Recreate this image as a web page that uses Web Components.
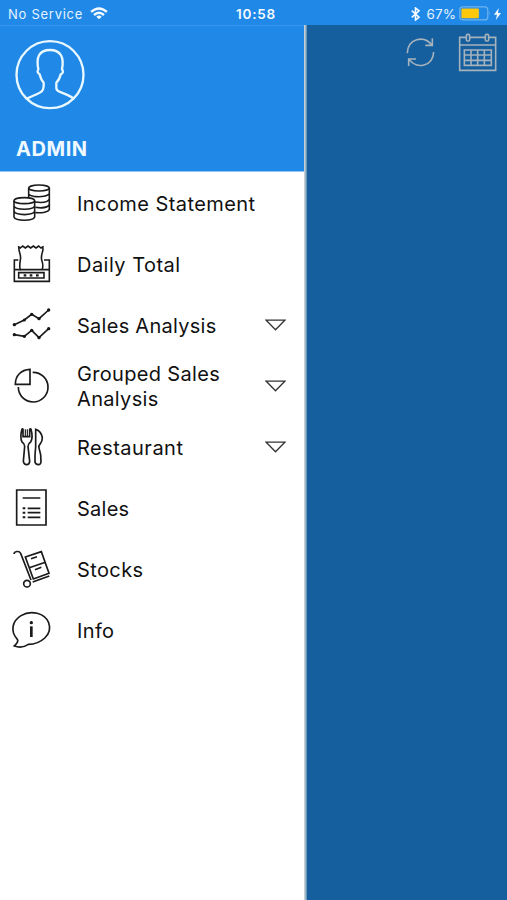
<!DOCTYPE html>
<html lang="en">
<head>
<meta charset="utf-8">
<title>Admin menu</title>
<style>
html,body{margin:0;height:100%}
body{font-family:Inter,"Liberation Sans",sans-serif;overflow:hidden}
</style>
</head>
<body>
<app-shell>
  <status-bar slot="status"></status-bar>
  <side-drawer slot="drawer">
    <user-header slot="header">ADMIN</user-header>
    <menu-row icon="coins" ls=".43">Income Statement</menu-row>
    <menu-row icon="receipt" ls=".48">Daily Total</menu-row>
    <menu-row icon="lines" ls=".27" expandable>Sales Analysis</menu-row>
    <menu-row icon="pie" ls=".33" expandable wrap>Grouped Sales Analysis</menu-row>
    <menu-row icon="cutlery" ls=".48" expandable>Restaurant</menu-row>
    <menu-row icon="list" ls=".25">Sales</menu-row>
    <menu-row icon="trolley" ls=".4">Stocks</menu-row>
    <menu-row icon="info" ls=".35">Info</menu-row>
  </side-drawer>
  <page-tools slot="page"></page-tools>
</app-shell>
<script>
class Base extends HTMLElement {
  connectedCallback() {
    if (this.shadowRoot) return;
    this.attachShadow({mode: 'open'}).innerHTML = this.view();
  }
}

customElements.define('app-shell', class extends Base {
  view() { return `<style>
    :host{display:grid;grid-template:25px 1fr / 307px 1fr;width:100%;height:100vh;background:#155f9f;overflow:hidden}
    slot[name=status]{grid-column:1/3;display:block}
    slot{display:block;min-width:0}
    </style><slot name="status"></slot><slot name="drawer"></slot><slot name="page"></slot>`; }
});

customElements.define('status-bar', class extends Base {
  view() { return `<style>
    :host{display:grid;grid-template-columns:1fr auto 1fr;align-items:center;height:25px;box-sizing:border-box;padding:2px 6px 0 8px;
      background:#2089e8;color:#e4f3ff;font-size:13px;line-height:22px;white-space:nowrap}
    .l,.r{display:flex;align-items:center}
    .r{justify-content:flex-end}
    .c{font-weight:600;font-size:13.5px;letter-spacing:.75px;color:#f4faff;padding-left:3px}
    .s{letter-spacing:.73px}
    svg{display:block}
    .wifi{margin-left:7px}
    .pct{margin:0 3px 0 6px;font-size:13.5px;letter-spacing:.1px}
    .bolt{margin-left:3px}
    </style>
    <div class="l"><span class="s">No Service</span>
      <svg class="wifi" width="18" height="13" viewBox="0 0 18 13" fill="none" stroke="#f4faff" stroke-width="2.400">
        <path d="M1.100 4.900Q9-2 16.900 4.900M4 8Q9 3.600 14 8"/><path d="M9 12.300L6.300 9.700Q9 7.400 11.700 9.700Z" fill="#f4faff" stroke="none"/></svg></div>
    <div class="c">10:58</div>
    <div class="r">
      <svg width="9" height="14" viewBox="0 0 9 14" fill="none" stroke="#f4faff" stroke-width="1.600"><path d="M.8 3.700L8 10.200L4.500 13V1L8 3.800L.8 10.300"/></svg>
      <span class="pct">67%</span>
      <svg width="32" height="15" viewBox="0 0 32 15"><rect x=".8" y=".9" width="28" height="13" rx="3" fill="none" stroke="#6fb3ee" stroke-width="1.200"/><rect x="2.400" y="2.600" width="17.500" height="9.600" rx="1" fill="#fdc70c"/><path d="M30.300 5.200Q32 7.400 30.300 9.600Z" fill="#6fb3ee"/></svg>
      <svg class="bolt" width="7" height="12" viewBox="0 0 7 12"><path d="M4.800 0L0 6.700H3L1.800 12L7 4.900H3.900Z" fill="#f4faff"/></svg>
    </div>`; }
});

customElements.define('side-drawer', class extends Base {
  view() { return `<style>
    :host{display:flex;flex-direction:column;height:100%;box-sizing:border-box;
      background:linear-gradient(90deg,#c4d1d8 0 1px,#9fb6c4 1px 2px,#6b97b8 2px) right/3px 100% no-repeat,#fff;padding-right:3px}
    nav{display:flex;flex-direction:column}
    </style><slot name="header"></slot><nav><slot></slot></nav>`; }
});

customElements.define('user-header', class extends Base {
  view() { return `<style>
    :host{display:flex;flex-direction:column;height:147px;box-sizing:border-box;padding:14px 15px 0;background:#2089e7;
      border-top:1px solid #3597ee;border-bottom:1px solid #8cc7f8;color:#eff9ff}
    svg{display:block}
    b{display:block;margin-top:27px;padding-left:1px;font-size:20px;line-height:24px;font-weight:700;letter-spacing:.55px}
    </style>
    <svg width="70" height="70" viewBox="45 119 210 210" fill="none" stroke="#e9f8ff" stroke-width="7" stroke-linejoin="round">
      <circle cx="150" cy="223" r="100.500"/>
      <path d="M82 294C101 285 115 281 125 273Q132 267 131 247C123 240 121 229 119 222C112 218 111 213 115 207C108 172 116 149 150 149C183 149 193 172 186 207C191 213 189 219 182 222C180 232 177 240 169 247V263Q169 270 178 274L200 283Q211 288 220 294"/></svg>
    <b><slot></slot></b>`; }
});

const icons = {
  coins: [0, `<g stroke-width="4.800"><ellipse cx="117" cy="48" rx="31" ry="9"/><path d="M86 48V76M148 48V113C145 119 128 124 106 122M148 65C144 72 125 76 101 73Q88 71 86 66M148 81C144 90 126 93 105 90M148 98C144 106 126 109 106 106"/>
    <ellipse cx="73" cy="86" rx="31" ry="9"/><path d="M42 86V135C47 148 99 148 104 135V86M42 102C47 115 99 115 104 102M42 118C47 131 99 131 104 118"/></g>`],
  receipt: [183, `<g stroke-width="4.800"><path d="M54 223L61 228L68 222L76 228L84 222L92 228L100 222L108 228L116 222L123 228L131 223M57 226C54 237 65 248 61 264C59 276 58 285 61 293H126C130 284 129 276 126 267C119 249 133 237 128 226"/>
    <path d="M55 264H43V328H148V264H132M43 293H61M127 293H148"/><path d="M56 302H132V318H56Z"/></g><path d="M71 310H79M89 310H97M108 310H116" stroke-width="7"/>`],
  lines: [-3, `<path stroke-width="5" d="M43 89L73 75L95 58L117 71L146 45M43 119L73 124L95 106L117 128L146 101"/>
    <g fill="#151515" stroke="none"><circle cx="43" cy="89" r="5"/><circle cx="73" cy="75" r="4.500"/><circle cx="95" cy="58" r="5"/><circle cx="117" cy="71" r="5"/><circle cx="146" cy="45" r="5"/><circle cx="43" cy="119" r="5"/><circle cx="73" cy="124" r="5"/><circle cx="95" cy="106" r="5"/><circle cx="117" cy="128" r="5"/><circle cx="146" cy="101" r="5"/></g>`],
  pie: [180, `<g stroke-width="5"><path d="M98 232A44.500 44.500 0 1 1 55 276"/><path d="M90 223V268H46C46 242 63 224 90 223Z"/></g>`],
  cutlery: [3, `<g stroke-width="5"><path d="M66 43Q59 67 66 81Q74 86 74 94L70 139Q72 149 80 149Q88 149 89 139L84 94Q84 86 92 81Q100 68 93 43Q91 40 89 43V65H69V43Q67 40 66 43Z"/><path d="M76 43V65M82 43V65" stroke-width="3.500"/>
    <path d="M107 43V96Q104 121 105 142Q108 149 115 149Q122 149 123 141Q124 119 117 99Q115 93 121 86Q127 78 127 68Q124 48 107 43Z"/></g>`],
  list: [186, `<path stroke-width="5" d="M50 225H138V330H50Z"/><path stroke-width="4.800" d="M68 249H121M83 280H121M83 293H121M83 307H121"/><path stroke-width="6" d="M68 280H76M68 293H76M68 307H76"/>`],
  trolley: [9, `<g stroke-width="5"><path d="M42 57C43 49 57 46 62 55L93 135M98 141L148 123"/><circle cx="81" cy="146" r="10"/><path d="M76 66L124 50L147 115L100 132ZM88 98L136 82"/><path d="M93 71L111 65M105 104L124 97"/></g>`],
  info: [192, `<path stroke-width="5" d="M52 313C28 286 39 257 63 242C93 224 134 234 146 263C159 299 122 328 85 328C72 337 57 338 43 333C51 326 56 319 52 313Z"/><circle cx="94" cy="263" r="5" fill="#151515" stroke="none"/><path stroke-width="8" d="M94 274V306"/>`]
};

customElements.define('menu-row', class extends Base {
  view() {
    const [top, art] = icons[this.getAttribute('icon')];
    const arrow = this.hasAttribute('expandable')
      ? `<svg class="a" width="21" height="12" viewBox="0 0 21 12" fill="none"><path d="M1.200 1.200H19.800L10.500 10.800Z" stroke="#333" stroke-width="1.300"/></svg>` : '';
    return `<style>
    :host{display:grid;grid-template-columns:77px 1fr auto;align-items:center;height:61px;box-sizing:border-box;padding-right:18px;color:#111;
      font-size:20px;line-height:25px}
    svg{display:block}
    span{padding-top:3px;letter-spacing:${this.getAttribute('ls')}px}
    :host([wrap]) span{padding-top:2px}
    .a{margin-top:1px}
    </style><svg width="70" height="61" viewBox="0 ${top} 210 183" fill="none" stroke="#1a1a1a">${art}</svg><span><slot></slot></span>${arrow}`;
  }
});

customElements.define('page-tools', class extends Base {
  view() { return `<style>
    :host{display:flex;justify-content:flex-end;align-items:flex-start;gap:22px;padding:7px 9px 0 0}
    svg{display:block}
    </style>
    <svg width="32" height="40" viewBox="450 96 96 120" fill="none" stroke="#a6b2bc" stroke-width="4.800"><path d="M460 160C461 116 509 104 534 135M535 115V136H514M539 156C537 198 489 211 465 178M464 198V177H486"/></svg>
    <svg width="40" height="40" viewBox="612 96 120 120" fill="none" stroke="#a6b2bc" stroke-width="4.800">
      <path d="M637 112H617V211H725V112H705M647 112H694M617 135H725M631 150H712V196H631ZM651 150V196M671 150V196M691 150V196M631 165H712M631 181H712"/><rect x="637" y="103" width="10" height="20" rx="4"/><rect x="694" y="103" width="10" height="20" rx="4"/></svg>`; }
});
</script>
</body>
</html>
